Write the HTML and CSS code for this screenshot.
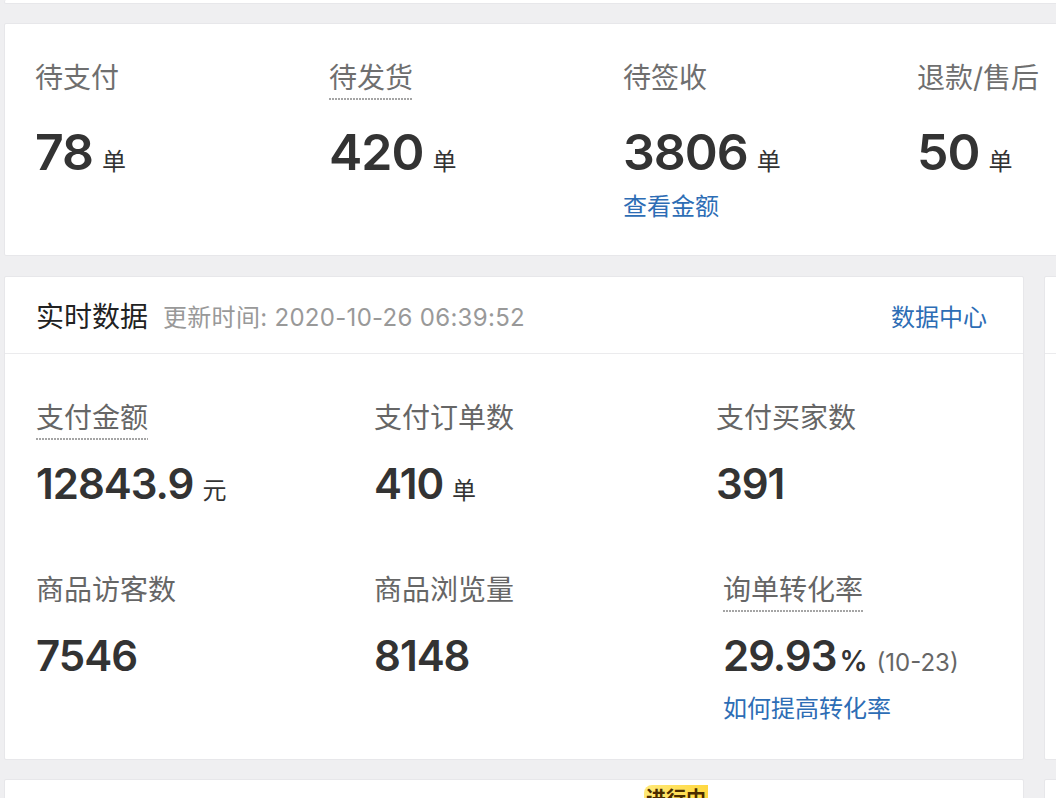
FILE: index.html
```html
<!DOCTYPE html>
<html lang="zh-CN">

<head>
    <meta charset="UTF-8">
    <meta name="viewport" content="width=device-width, initial-scale=1.0">
    <title>店铺概况</title>
    <link rel="stylesheet" href="styles.css">
</head>

<body>
    <div class="page">
        <div class="card card-stub"></div>

        <!-- 订单状态 -->
        <div class="card orders">
            <div class="stat">
                <span class="label">待支付</span>
                <div class="num">78<span class="unit">单</span></div>
            </div>
            <div class="stat">
                <span class="label label-tip">待发货</span>
                <div class="num">420<span class="unit">单</span></div>
            </div>
            <div class="stat">
                <span class="label">待签收</span>
                <div class="num">3806<span class="unit">单</span></div>
                <a class="link" href="#">查看金额</a>
            </div>
            <div class="stat">
                <span class="label">退款/售后</span>
                <div class="num">50<span class="unit">单</span></div>
            </div>
        </div>

        <div class="split">
            <div class="col-main">
                <!-- 实时数据 -->
                <div class="card realtime">
                    <div class="card-head">
                        <span class="title">实时数据</span>
                        <span class="updated">更新时间: 2020-10-26 06:39:52</span>
                        <a class="more" href="#">数据中心</a>
                    </div>
                    <div class="stats">
                        <div class="stat">
                            <span class="label label-tip">支付金额</span>
                            <div class="num">12843.9<span class="unit">元</span></div>
                        </div>
                        <div class="stat">
                            <span class="label">支付订单数</span>
                            <div class="num">410<span class="unit">单</span></div>
                        </div>
                        <div class="stat">
                            <span class="label">支付买家数</span>
                            <div class="num">391</div>
                        </div>
                        <div class="stat">
                            <span class="label">商品访客数</span>
                            <div class="num">7546</div>
                        </div>
                        <div class="stat">
                            <span class="label">商品浏览量</span>
                            <div class="num">8148</div>
                        </div>
                        <div class="stat stat-shift">
                            <span class="label label-tip">询单转化率</span>
                            <div class="num">29.93<span class="pct">%</span><span class="note">(10-23)</span></div>
                            <a class="link" href="#">如何提高转化率</a>
                        </div>
                    </div>
                </div>

                <div class="card promo">
                    <span class="badge">进行中</span>
                </div>
            </div>

            <div class="col-side">
                <div class="card side">
                    <div class="card-head"></div>
                </div>
                <div class="card side side-low"></div>
            </div>
        </div>
    </div>
</body>

</html>
```

FILE: styles.css
```css
* {
    box-sizing: border-box;
}

body {
    margin: 0;
    background: #efeff1;
    color: #333;
    font-family: "Inter", "Noto Sans CJK SC", sans-serif;
    overflow: hidden;
}

a {
    text-decoration: none;
}

.page {
    width: 1320px;
    padding-left: 4px;
}

.card {
    background: #fff;
    border: 1px solid #e7e7ea;
    border-radius: 2px;
}

.card-stub {
    height: 4px;
    border-top: none;
    margin-bottom: 19px;
}

/* 订单状态 */
.orders {
    display: grid;
    grid-template-columns: repeat(4, 294px);
    padding: 34px 0 32px 30px;
    margin-bottom: 20px;
}

.stat {
    display: flex;
    flex-direction: column;
    align-items: flex-start;
}

.label {
    display: inline-block;
    font-size: 28px;
    line-height: 40px;
    padding-bottom: 2px;
    color: #6f6f6f;
}

/* 虚线下划线 */
.label-tip {
    background-image: linear-gradient(to right, #a5a5a5 2px, transparent 2px);
    background-size: 3px 2px;
    background-repeat: repeat-x;
    background-position: left bottom;
}

.num {
    margin-top: 22px;
    font-size: 50px;
    line-height: 60px;
    font-weight: 600;
    letter-spacing: -1px;
    color: #333;
    white-space: nowrap;
}

.unit {
    margin-left: 9px;
    font-size: 24px;
    line-height: 1;
    font-weight: 400;
    letter-spacing: 0;
}

.link {
    display: block;
    margin-top: 9px;
    font-size: 24px;
    line-height: 32px;
    color: #2d6db5;
}

/* 实时数据 + 右侧栏 */
.split {
    display: flex;
    gap: 20px;
}

.col-main {
    width: 1020px;
    display: flex;
    flex-direction: column;
    gap: 19px;
}

.col-side {
    width: 260px;
    display: flex;
    flex-direction: column;
    gap: 19px;
}

.card-head {
    display: flex;
    align-items: center;
    height: 77px;
    padding: 0 36px 0 31px;
    border-bottom: 1px solid #ebebed;
}

.title {
    font-size: 28px;
    color: #222;
}

.updated {
    margin-left: 15px;
    font-size: 24px;
    letter-spacing: 0.3px;
    color: #999;
}

.more {
    margin-left: auto;
    font-size: 24px;
    color: #2d6db5;
}

.stats {
    display: grid;
    grid-template-columns: 338px 342px 1fr;
    row-gap: 60px;
    padding: 44px 0 34px 31px;
}

.stats .label {
    color: #666;
}

.stats .num {
    margin-top: 18px;
    font-size: 42px;
    line-height: 52px;
}

.stats .link {
    margin-top: 11px;
}

.stat-shift {
    margin-left: 7px;
}

.pct {
    margin-left: 3px;
    font-size: 28px;
    line-height: 1;
    letter-spacing: 0;
}

.note {
    margin-left: 9px;
    font-size: 24px;
    line-height: 1;
    font-weight: 400;
    letter-spacing: 0;
    color: #666;
}

.side {
    height: 484px;
}

.promo,
.side-low {
    position: relative;
    height: 120px;
}

.badge {
    position: absolute;
    left: 639px;
    top: 5px;
    padding: 0 2px;
    font-size: 20px;
    line-height: 28px;
    font-weight: 700;
    color: #4a2c00;
    background: linear-gradient(90deg, #ffe978, #ffd840);
    border-radius: 8px 0 8px 0;
}
```
